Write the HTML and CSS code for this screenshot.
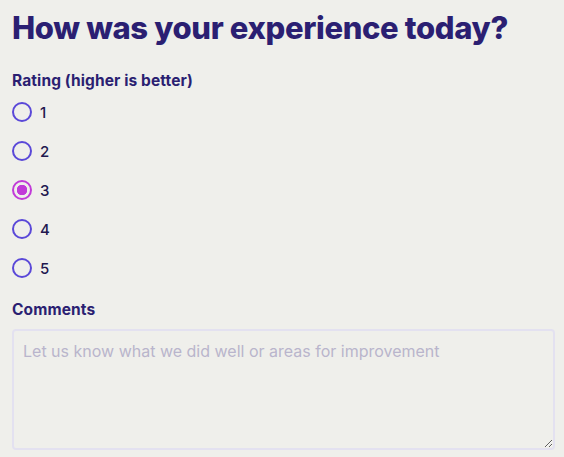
FILE: index.html
```html
<!DOCTYPE html>
<html>
<head>
<meta charset="utf-8">
<link rel="stylesheet" href="styles.css">
</head>
<body>
<form class="survey">
  <h1 class="title">How was your experience today?</h1>
  <fieldset class="group">
    <legend class="label">Rating (higher is better)</legend>
    <div class="options">
      <label class="option"><input type="radio" name="r" class="radio"><span>1</span></label>
      <label class="option"><input type="radio" name="r" class="radio"><span>2</span></label>
      <label class="option"><input type="radio" name="r" class="radio" checked><span>3</span></label>
      <label class="option"><input type="radio" name="r" class="radio"><span>4</span></label>
      <label class="option"><input type="radio" name="r" class="radio"><span>5</span></label>
    </div>
  </fieldset>
  <label class="label comments-label" for="c">Comments</label>
  <textarea id="c" class="comments" placeholder="Let us know what we did well or areas for improvement"></textarea>
</form>
</body>
</html>
```
FILE: styles.css
```css
html, body {
  margin: 0;
  background: #efefeb;
}
body {
  padding: 8px 9px 0 12px;
  font-family: "Inter", "Noto Sans", sans-serif;
  color: #2a1e6e;
}
.survey {
  display: flex;
  flex-direction: column;
}
.title {
  margin: 0;
  font-size: 31px;
  font-weight: 800;
  line-height: 40px;
  letter-spacing: -0.35px;
  color: #2b1f72;
}
.group {
  border: 0;
  margin: 0;
  padding: 0;
  margin-top: 24px;
}
.label {
  display: block;
  padding: 0;
  font-size: 15.5px;
  font-weight: 700;
  line-height: 18px;
  letter-spacing: 0.1px;
  color: #2b1f72;
}
.options {
  display: flex;
  flex-direction: column;
  gap: 19px;
  margin-top: 12px;
}
.option {
  display: flex;
  align-items: center;
  gap: 8px;
  height: 20px;
  font-size: 15px;
  font-weight: 500;
  color: #22184f;
}
.radio {
  appearance: none;
  -webkit-appearance: none;
  margin: 0;
  width: 20px;
  height: 20px;
  border: 2px solid #5a48d8;
  border-radius: 50%;
  box-sizing: border-box;
  background: transparent;
}
.radio:checked {
  border-color: #c13ad8;
  background: radial-gradient(circle, #c13ad8 0 5px, transparent 5.5px);
}
.comments-label {
  margin-top: 23px;
}
.comments {
  margin-top: 10px;
  height: 121px;
  box-sizing: border-box;
  border: 2px solid #e3e1f0;
  border-radius: 4px;
  background: #efefeb;
  padding: 10px 9px;
  font-family: "Inter", "Noto Sans", sans-serif;
  font-size: 16px;
  color: #22184f;
  resize: vertical;
}
.comments::placeholder {
  color: #b9b5cc;
}
```
